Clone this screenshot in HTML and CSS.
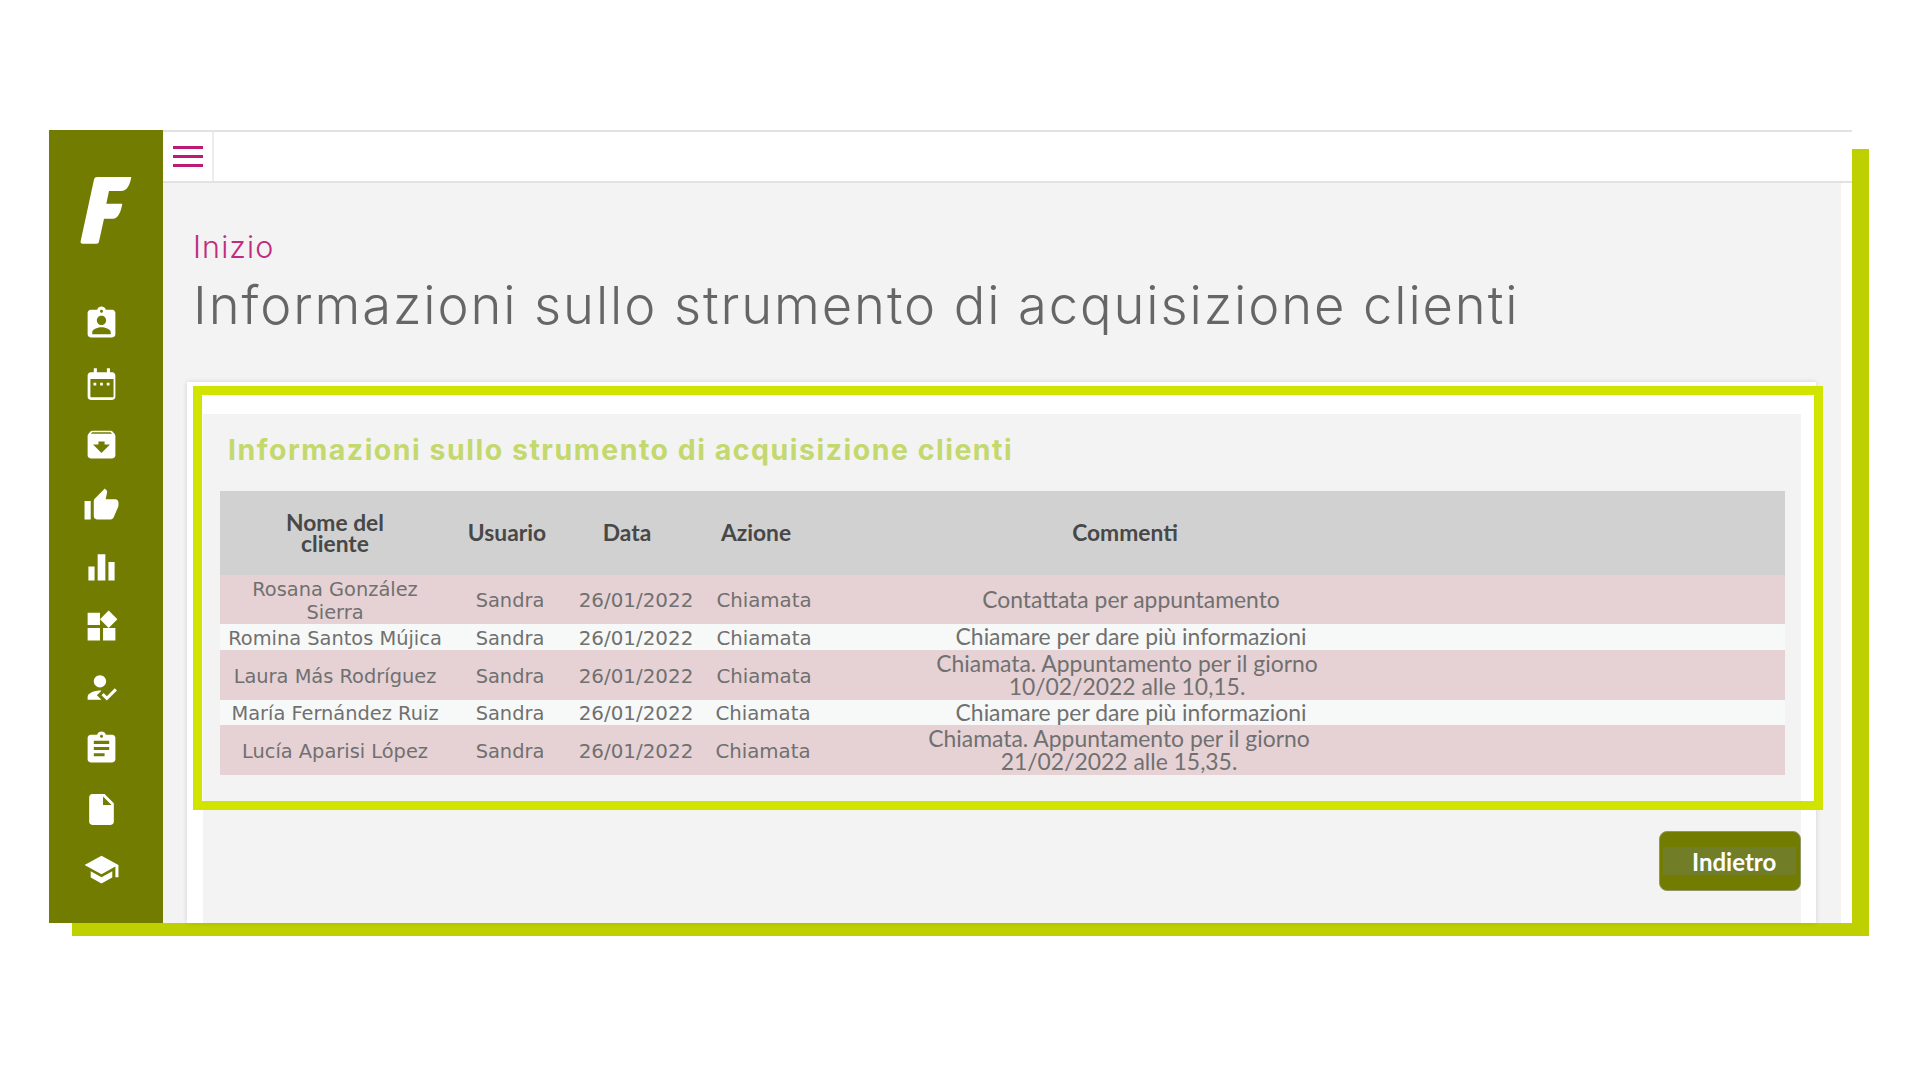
FILE: index.html
```html
<!DOCTYPE html>
<html lang="it">
<head>
<meta charset="utf-8">
<title>Informazioni sullo strumento di acquisizione clienti</title>
<link rel="stylesheet" href="styles.css">
</head>
<body>
<div class="app">
  <aside class="sidebar">
    <svg class="logo" viewBox="0 0 52 67"><path d="M17.5 0H51.3C50 8 47 14 41 14H29L26.3 26.7H42.3C41 35 38 41.7 33 41.7H24L19 64.5C18.7 66 18 66.7 16.500 66.700H2.500C1 66.700 .3 65.800 .7 64L14 2.500C14.400 .8 15.500 0 17.500 0Z"/></svg>
    <nav class="icons">
      <svg viewBox="0 0 24 24"><path d="M19 3h-4.180C14.400 1.840 13.300 1 12 1c-1.300 0-2.400.84-2.820 2H5c-1.100 0-2 .9-2 2v14c0 1.100.9 2 2 2h14c1.100 0 2-.9 2-2V5c0-1.100-.9-2-2-2zm-7 0c.55 0 1 .45 1 1s-.45 1-1 1-1-.45-1-1 .45-1 1-1zm0 4c1.660 0 3 1.340 3 3s-1.340 3-3 3-3-1.340-3-3 1.340-3 3-3zm6 12H6v-1.400c0-2 4-3.100 6-3.100s6 1.100 6 3.100V19z"/></svg>
      <svg viewBox="0 0 24 24"><path fill-rule="evenodd" d="M7 1.500h2v2.500h6.500V1.500h2v2.500h1.500c1.100 0 2 .9 2 2v14c0 1.100-.9 2-2 2H5c-1.100 0-2-.9-2-2V6c0-1.100.9-2 2-2h2V1.500zM4.800 8.500V20c0 .2.100.3.300.3h14.400c.2 0 .3-.1.300-.3V8.500H4.800zM6.800 10.800h1.800v1.800H6.800zM11.100 10.800h1.800v1.800h-1.800zM15.400 10.800h1.800v1.800h-1.800z"/></svg>
      <svg viewBox="0 0 24 24"><path d="M20.540 5.230l-1.390-1.680C18.880 3.210 18.470 3 18 3H6c-.47 0-.88.21-1.160.55L3.460 5.230C3.170 5.570 3 6.020 3 6.500V19c0 1.100.9 2 2 2h14c1.100 0 2-.9 2-2V6.500c0-.48-.17-.93-.46-1.270zM12 17.500L6.500 12H10v-2h4v2h3.500L12 17.500zM5.120 5l.81-1h12l.94 1H5.120z"/></svg>
      <svg viewBox="0 0 24 24"><path d="M1 21h4V9H1v12zm22-11c0-1.100-.9-2-2-2h-6.310l.95-4.570.03-.32c0-.41-.17-.79-.44-1.060L14.170 1 7.590 7.590C7.220 7.950 7 8.450 7 9v10c0 1.100.9 2 2 2h9c.83 0 1.540-.5 1.840-1.220l3.020-7.050c.09-.23.14-.47.14-.73v-2z"/></svg>
      <svg viewBox="0 0 24 24"><path d="M3.500 12h4v9h-4zM9.500 4h5v17h-5zM16.500 9h4v12h-4z"/></svg>
      <svg viewBox="0 0 24 24"><path d="M13 13v8h8v-8h-8zM3 21h8v-8H3v8zM3 3v8h8V3H3zm13.660-1.310L11 7.340 16.660 13l5.660-5.660-5.660-5.650z"/></svg>
      <svg viewBox="0 0 24 24"><path d="M9 17l3-2.940c-.39-.04-.68-.06-1-.06-2.670 0-8 1.340-8 4v2h9l-3-3zm2-5c2.210 0 4-1.790 4-4s-1.790-4-4-4-4 1.790-4 4 1.790 4 4 4zM15.470 20.500L12 17l1.400-1.410 2.070 2.080 5.130-5.170 1.400 1.410z"/></svg>
      <svg viewBox="0 0 24 24"><path d="M19 3h-4.180C14.400 1.840 13.300 1 12 1c-1.300 0-2.400.84-2.820 2H5c-1.100 0-2 .9-2 2v14c0 1.100.9 2 2 2h14c1.100 0 2-.9 2-2V5c0-1.100-.9-2-2-2zm-7 0c.55 0 1 .45 1 1s-.45 1-1 1-1-.45-1-1 .45-1 1-1zm2 14H7v-2h7v2zm3-4H7v-2h10v2zm0-4H7V7h10v2z"/></svg>
      <svg viewBox="0 0 24 24"><path d="M6 2c-1.100 0-1.990.9-1.990 2L4 20c0 1.100.89 2 1.990 2H18c1.100 0 2-.9 2-2V8l-6-6H6zm7 7V3.500L18.500 9H13z"/></svg>
      <svg viewBox="0 0 24 24"><path d="M5 13.180v4L12 21l7-3.820v-4L12 17l-7-3.820zM12 3L1 9l11 6 9-4.910V17h2V9L12 3z"/></svg>
    </nav>
  </aside>
  <div class="main">
    <header class="topbar">
      <div class="burger-cell">
        <div class="burger"><span></span><span></span><span></span></div>
      </div>
    </header>
    <main class="content">
      <div class="crumb">Inizio</div>
      <h1 class="page-title">Informazioni sullo strumento di acquisizione clienti</h1>
      <section class="card">
        <div class="highlight"></div>
        <div class="panel">
          <h2 class="panel-title">Informazioni sullo strumento di acquisizione clienti</h2>
          <table class="log">
            <colgroup>
              <col class="c-name"><col class="c-user"><col class="c-date"><col class="c-action"><col class="c-comment"><col>
            </colgroup>
            <thead>
              <tr>
                <th>Nome del<br>cliente</th>
                <th class="h-user">Usuario</th>
                <th class="h-date">Data</th>
                <th class="h-action">Azione</th>
                <th class="h-comment">Commenti</th>
                <th></th>
              </tr>
            </thead>
            <tbody>
              <tr class="pink r1">
                <td class="name">Rosana González<br>Sierra</td><td class="user">Sandra</td><td class="date">26/01/2022</td><td class="action">Chiamata</td><td class="comment">Contattata per appuntamento</td><td></td>
              </tr>
              <tr class="plain r2">
                <td class="name">Romina Santos Mújica</td><td class="user">Sandra</td><td class="date">26/01/2022</td><td class="action">Chiamata</td><td class="comment">Chiamare per dare più informazioni</td><td></td>
              </tr>
              <tr class="pink r3">
                <td class="name">Laura Más Rodríguez</td><td class="user">Sandra</td><td class="date">26/01/2022</td><td class="action">Chiamata</td><td class="comment shift-a">Chiamata. Appuntamento per il giorno<br>10/02/2022 alle 10,15.</td><td></td>
              </tr>
              <tr class="plain r4">
                <td class="name">María Fernández Ruiz</td><td class="user">Sandra</td><td class="date">26/01/2022</td><td class="action shift-c">Chiamata</td><td class="comment">Chiamare per dare più informazioni</td><td></td>
              </tr>
              <tr class="pink r5">
                <td class="name">Lucía Aparisi López</td><td class="user">Sandra</td><td class="date">26/01/2022</td><td class="action shift-c">Chiamata</td><td class="comment shift-b">Chiamata. Appuntamento per il giorno<br>21/02/2022 alle 15,35.</td><td></td>
              </tr>
            </tbody>
          </table>
          <div class="actions">
            <button class="back" type="button"><span>Indietro</span></button>
          </div>
        </div>
      </section>
    </main>
  </div>
</div>
</body>
</html>
```
FILE: styles.css
```css
* { box-sizing: border-box; }
html, body { margin: 0; padding: 0; background: #fff; }
body { height: 1080px; overflow: hidden; padding: 130px 0 0 49px; font-family: "Lato", sans-serif; }

.app {
  display: flex;
  width: 1803px;
  height: 793px;
  background: #fff;
  box-shadow: 20px 16px 0 -3px #bed000;
}

.sidebar {
  width: 114px;
  flex: none;
  background: #717c00;
  display: flex;
  flex-direction: column;
  align-items: center;
  padding: 47px 9px 0 0;
}
.logo { width: 52px; height: 67px; fill: #fff; margin-left: 8px; display: block; }
.icons { display: flex; flex-direction: column; gap: 23.700px; margin-top: 61px; }
.icons svg { width: 37px; height: 37px; fill: #fff; display: block; }

.main { flex: 1; display: flex; flex-direction: column; min-width: 0; }

.topbar {
  height: 53px;
  flex: none;
  border-top: 2px solid #e2e2e2;
  border-bottom: 2px solid #e2e2e2;
  display: flex;
}
.burger-cell {
  width: 51px;
  border-right: 2px solid #ececec;
  padding: 14px 0 0 10px;
}
.burger { width: 30px; display: flex; flex-direction: column; gap: 6px; }
.burger span { display: block; height: 3px; background: #bc1a75; }

.content {
  flex: 1;
  min-height: 0;
  margin-right: 11px;
  background: #f3f3f3;
  padding: 46px 25px 0 24px;
  display: flex;
  flex-direction: column;
}
.crumb {
  font-family: "Inter", sans-serif;
  font-weight: 300;
  font-size: 30.500px;
  line-height: 36px;
  letter-spacing: 1.100px;
  color: #c02c7f;
  padding-left: 6px;
}
.page-title {
  margin: 10px 0 0;
  font-family: "Inter", sans-serif;
  font-weight: 300;
  font-size: 52.500px;
  line-height: 60px;
  letter-spacing: 1.900px;
  color: #666;
  padding-left: 6px;
  white-space: nowrap;
}

.card {
  position: relative;
  flex: 1;
  margin-top: 47px;
  background: #fff;
  padding: 32px 15px 0 16px;
  box-shadow: 0 0 5px rgba(0, 0, 0, .14);
  display: flex;
}
.highlight {
  position: absolute;
  left: 6px;
  top: 4px;
  width: 1630px;
  height: 424px;
  border: 9px solid #d0e400;
  pointer-events: none;
}
.panel {
  flex: 1;
  background: #f3f3f3;
  padding: 0 16px 0 17px;
  min-width: 0;
}
.panel-title {
  margin: 0;
  padding: 18px 0 0 8px;
  height: 77px;
  font-family: "Inter", sans-serif;
  font-weight: 700;
  font-size: 28.500px;
  line-height: 36px;
  letter-spacing: 1.500px;
  color: #c3d86d;
  white-space: nowrap;
}

.log { width: 100%; border-collapse: collapse; table-layout: fixed; }
.c-name { width: 230px; }
.c-user { width: 120px; }
.c-date { width: 132px; }
.c-action { width: 124px; }
.c-comment { width: 610px; }

.log th {
  height: 84px;
  padding: 0 0 1px;
  background: #d1d1d1;
  color: #484848;
  font-family: "Lato", sans-serif;
  font-weight: 700;
  font-size: 22.800px;
  line-height: 21px;
  text-align: center;
}
.log .h-user { padding-right: 6px; }
.log .h-date { padding-right: 18px; }
.log .h-action { padding-right: 16px; }
.log .h-comment { padding-right: 12px; }

.log td {
  padding: 0;
  text-align: center;
  color: #707070;
  white-space: nowrap;
}
.pink { background: #e6d2d5; }
.plain { background: #f7f9f8; }
.r1 { height: 49px; }
.r2 { height: 26px; }
.r3 { height: 50px; }
.r4 { height: 25px; }
.r5 { height: 50px; }

.log .name, .log .user, .log .date, .log .action {
  font-family: "DejaVu Sans", sans-serif;
  font-size: 19.400px;
  line-height: 23px;
  padding-top: 2px;
}
.log .date { font-size: 19.900px; }
.log .action { font-size: 19.800px; }
.comment { font-family: "Lato", sans-serif; font-size: 22.900px; line-height: 23.500px; }
.log .shift-a { padding-right: 8px; }
.log .shift-b { padding-right: 24px; }
.log .shift-c { padding-right: 2px; }

.actions { display: flex; justify-content: flex-end; margin: 56px -16px 0 0; }
.back {
  width: 142px;
  height: 60px;
  padding: 15px 4px 15px 3px;
  border: 1px solid #8f986a;
  border-radius: 8px;
  background: #717c00;
  display: flex;
  cursor: pointer;
}
.back span {
  flex: 1;
  background: #727d27;
  color: #fff;
  font-family: "Lato", sans-serif;
  font-weight: 700;
  font-size: 24px;
  line-height: 30px;
  padding-left: 29px;
  text-align: left;
}
```
